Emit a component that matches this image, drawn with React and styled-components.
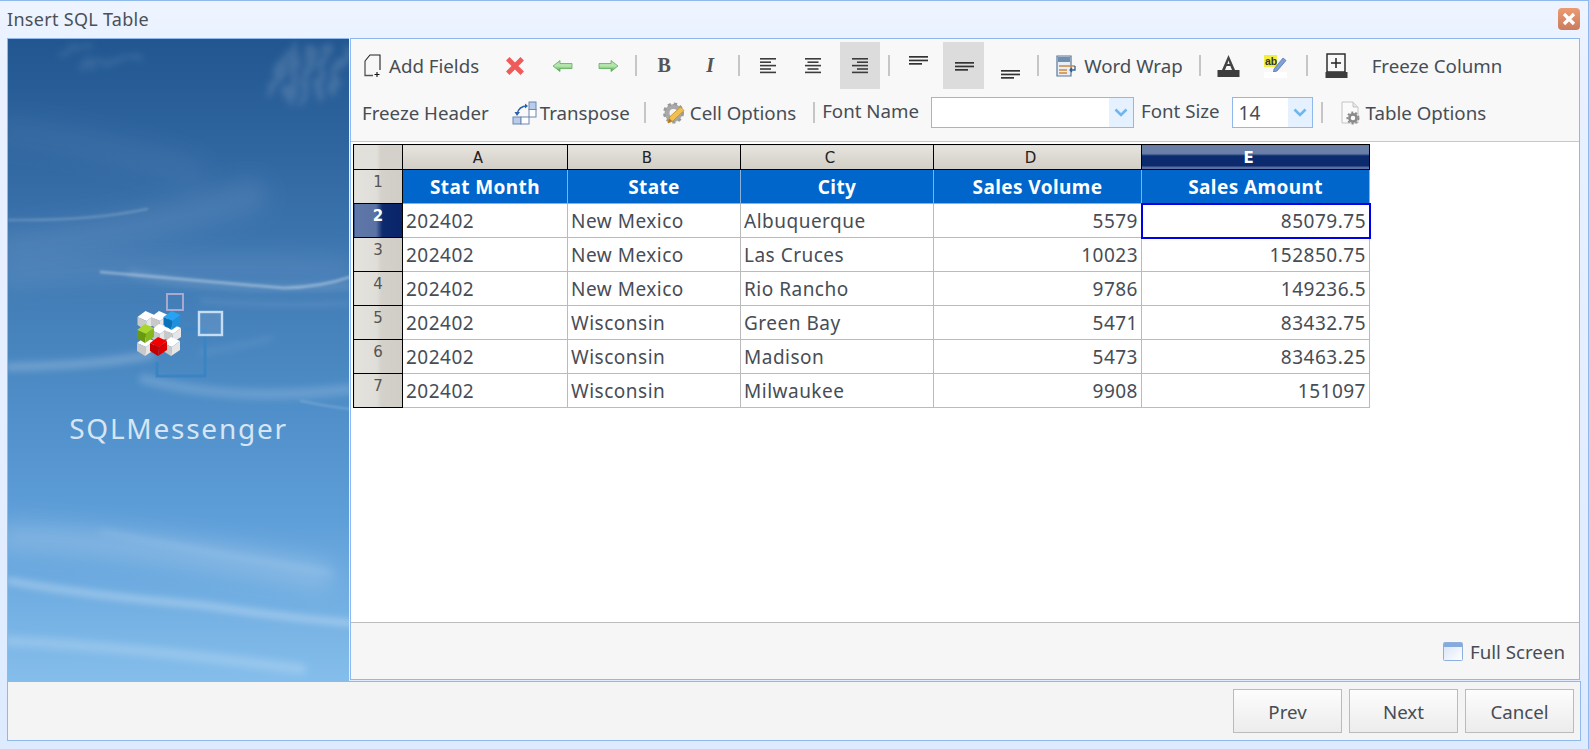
import React from 'react';
import styled, { createGlobalStyle, css } from 'styled-components';

const Global = createGlobalStyle`
  html, body { margin: 0; padding: 0; }
  body { font-family: "Noto Sans", "Open Sans", sans-serif; color: #474d55; overflow: hidden; }
  * { box-sizing: border-box; }
`;

const Window = styled.div`
  width: 1589px; height: 749px;
  display: flex; flex-direction: column;
  border: 1px solid #8fb8ec; border-bottom: 0; border-left: 0;
  background: linear-gradient(#eef4ff 0, #e9f1ff 60px, #deebff 100%);
`;
const TitleBar = styled.div`
  height: 37px; flex: none;
  display: flex; align-items: center; justify-content: space-between;
  padding: 0 8px 2px 7px;
`;
const Title = styled.div`
  font-size: 18px; letter-spacing: 0.3px; color: #4a5058;
`;
const CloseButton = styled.div`
  width: 22px; height: 22px; border-radius: 4px;
  background: linear-gradient(#ec9a72, #c97c5e);
  display: flex; align-items: center; justify-content: center;
`;
const Body = styled.div`
  flex: none; height: 643px; margin: 0 7px 0 7px;
  display: flex; gap: 1px;
`;
const Sidebar = styled.div`
  position: relative; width: 342px; flex: none; overflow: hidden;
  border: 1px solid #8fb8ec; border-bottom: 0; border-right: 0;
  display: flex; flex-direction: column; align-items: center;
  padding-top: 251px;
  background: #4d8cc6;
`;
const SkyArt = styled.svg`
  position: absolute; left: 0; top: 0; width: 342px; height: 643px;
`;
const LogoArt = styled.svg`
  position: relative; width: 100px; height: 90px; flex: none;
`;
const Brand = styled.div`
  position: relative; margin-top: 28px;
  font-size: 28px; line-height: 40px; letter-spacing: 1.75px; color: #d6e5f4;
`;
const Main = styled.div`
  flex: none; width: 1230px; height: 642px;
  border: 1px solid #8fb8ec;
  display: flex; flex-direction: column;
  background: #fff;
`;
const Toolbar = styled.div`
  flex: none; height: 103px; padding-top: 3px;
  background: #f8f8f8; border-bottom: 1px solid #b4cbea;
  display: flex; flex-direction: column;
`;
const Row = styled.div`
  height: 47px; display: flex; align-items: center;
  padding-left: ${p => p.$pad}px; white-space: nowrap;
`;
const Tool = styled.div`
  flex: none; height: 47px; display: flex; align-items: center;
  margin-left: ${p => p.$ml || 0}px;
  gap: ${p => p.$gap || 0}px;
  font-size: 18.7px; color: #474d55;
  ${p => p.$w && css`width: ${p.$w}px; justify-content: center;`}
  ${p => p.$active && css`background: #dcdcdc;`}
`;
const Sep = styled.div`
  flex: none; width: 2px; height: 21px; background: #c6c6c6;
  margin-left: ${p => p.$ml}px;
`;
const FieldLabel = styled.div`
  flex: none; font-size: 18.7px; color: #474d55;
  margin-left: ${p => p.$ml}px; margin-bottom: 4px;
`;
const Combo = styled.div`
  flex: none; width: ${p => p.$w}px; height: 31px; margin-left: ${p => p.$ml}px;
  border: 1px solid #8fb8ec; background: #fff;
  display: flex; justify-content: space-between; align-items: stretch;
  font-size: 19px; color: #474d55;
`;
const ComboValue = styled.div`
  padding-left: 6px; line-height: 31px;
`;
const ComboArrow = styled.div`
  width: 24px; background: #e6f1ff;
  display: flex; align-items: center; justify-content: center;
`;
const GlyphB = styled.span`
  font-family: "Liberation Serif", serif; font-weight: 700; font-size: 20px; color: #555;
`;
const GlyphI = styled.span`
  font-family: "Liberation Serif", serif; font-weight: 700; font-style: italic; font-size: 20px; color: #555;
`;
const TableArea = styled.div`
  flex: 1; background: #fff; padding: 2px 0 0 2px; overflow: hidden;
`;
const Sheet = styled.table`
  border-collapse: collapse; table-layout: fixed; width: 1016px;
  font-size: 19px; letter-spacing: 0.5px; color: #474d55;
`;
const ColHead = styled.th`
  height: 25px; border: 1px solid #000;
  font-family: "DejaVu Sans", sans-serif; font-size: 15px; letter-spacing: 0; line-height: 1;
  padding: 3px 14px 0 0;
  ${p => p.$sel
    ? css`color: #fff; font-weight: 700;
        background: linear-gradient(#6a7fa8 0, #6a7fa8 35%, #0c2a6e 42%, #0c2a6e 86%, #5c72a4 90%);`
    : css`color: #222; font-weight: 400;
        background: linear-gradient(#e6e4de, #d2cec5);`}
`;
const Corner = styled.th`
  height: 25px; padding: 0; border: 1px solid #000;
  background: linear-gradient(90deg, #e2e0da 0, #e2e0da 46%, #d4d1ca 54%);
`;
const RowHead = styled.td`
  height: 34px; padding: 0 0 10px; text-align: center; border: 1px solid #000;
  font-family: "DejaVu Sans", sans-serif; font-size: 15px; letter-spacing: 0;
  ${p => p.$sel
    ? css`color: #fff; font-weight: 700; background: linear-gradient(90deg, #6078a8 0, #5a72a4 45%, #0c2a6e 58%, #0a2468 100%);`
    : css`color: #555; background: linear-gradient(90deg, #e4e2dc 0, #e0ded8 46%, #d4d1ca 56%, #d0cdc6 100%);`}
`;
const HeadCell = styled.td`
  height: 34px; padding: 0; text-align: center;
  background: #0066cc; color: #fff; font-weight: 700; letter-spacing: 0.4px;
  border: 1px solid #8ab0dc; border-top-color: #000;
`;
const Cell = styled.td`
  height: 34px; padding: 0 3px; border: 1px solid #bbb;
  text-align: ${p => (p.$num ? 'right' : 'left')};
  white-space: nowrap; background: #fff;
  ${p => p.$sel && css`outline: 2px solid #0000e6; outline-offset: -1px;`}
`;
const StatusBar = styled.div`
  flex: none; height: 57px; padding-top: 1px; background: #f6f6f6; border-top: 1px solid #bbb;
  display: flex; align-items: center; justify-content: flex-end;
  padding-right: 14px; gap: 7px; font-size: 18.7px; color: #474d55;
`;
const Footer = styled.div`
  flex: none; height: 60px; margin: 0 7px;
  background: #f4f4f4; border: 1px solid #8fb8ec;
  display: flex; align-items: center; justify-content: flex-end; gap: 7px; padding-right: 6px;
`;
const Button = styled.button`
  width: 109px; height: 44px; padding: 0; font: inherit; font-size: 18.7px; color: #474d55;
  border: 1px solid #bbb; background: linear-gradient(#fdfdfd, #ececec); 
`;

const AlignIcon = ({ widths, anchor }) => (
  <svg width="20" height="20" viewBox="0 0 20 20">
    {widths.map((w, i) => {
      const x = anchor === 'l' ? 2 : anchor === 'r' ? 18 - w : 10 - w / 2;
      return <rect key={i} x={x} y={2 + i * 3.4} width={w} height="1.6" fill="#3c3c3c" />;
    })}
  </svg>
);
const VAlignIcon = ({ y }) => (
  <svg width="22" height="40" viewBox="0 0 22 40">
    <rect x="2" y={y} width="19" height="1.7" fill="#333" />
    <rect x="2" y={y + 3.6} width="19" height="1.7" fill="#333" />
    <rect x="2" y={y + 7} width="13" height="1.7" fill="#333" />
  </svg>
);
const Arrow = ({ dir }) => (
  <svg width="21" height="14" viewBox="0 0 21 14">
    <defs>
      <linearGradient id={`g${dir}`} x1="0" y1="0" x2="0" y2="1">
        <stop offset="0" stopColor="#a6dba0" /><stop offset=".5" stopColor="#b8e6ae" /><stop offset="1" stopColor="#3f9c42" />
      </linearGradient>
    </defs>
    <path transform={dir === 'r' ? 'translate(21 0) scale(-1 1)' : undefined}
      d="M1 7 L8 1.5 V4.5 H20 V9.5 H8 V12.5 Z" fill={`url(#g${dir})`} stroke="#5cb05c" strokeWidth=".8" />
  </svg>
);

const Cube = ({ x, y, t = '#fff', l = '#c9c9c9', r = '#e6e6e6' }) => (
  <g transform={`translate(${x} ${y})`}>
    <polygon points="0,6 8,0 17,4 9,10" fill={t} />
    <polygon points="0,6 9,10 8,19 0,14" fill={l} />
    <polygon points="9,10 17,4 17,13 8,19" fill={r} />
  </g>
);

const Soft = ({ id, dev }) => (
  <filter id={id} filterUnits="userSpaceOnUse" x="-60" y="-60" width="480" height="800">
    <feGaussianBlur stdDeviation={dev} />
  </filter>
);

const Sky = () => (
  <SkyArt viewBox="7 38 342 643" preserveAspectRatio="none">
    <defs>
      <linearGradient id="sky" x1="0" y1="0" x2="0" y2="1">
        <stop offset="0" stopColor="#215690" />
        <stop offset=".16" stopColor="#2f659f" />
        <stop offset=".35" stopColor="#3f78b2" />
        <stop offset=".55" stopColor="#4d8cc6" />
        <stop offset=".75" stopColor="#5f9fd9" />
        <stop offset="1" stopColor="#85beeb" />
      </linearGradient>
      <Soft id="b1" dev="1.2" />
      <Soft id="b3" dev="3.5" />
      <Soft id="b8" dev="11" />
      <filter id="cloud" filterUnits="userSpaceOnUse" x="-60" y="-60" width="480" height="300">
        <feTurbulence type="fractalNoise" baseFrequency=".05" numOctaves="3" seed="7" result="n" />
        <feDisplacementMap in="SourceGraphic" in2="n" scale="20" xChannelSelector="R" yChannelSelector="G" result="d" />
        <feGaussianBlur in="d" stdDeviation="3.2" />
      </filter>
    </defs>
    <rect x="7" y="38" width="342" height="643" fill="url(#sky)" />
    <g fill="none" stroke="#fff" strokeLinecap="round">
      <path filter="url(#cloud)" d="M272 92 L286 50 M288 96 L296 48 M302 100 L310 46 M318 96 L322 50 M332 88 L345 48" strokeWidth="9" strokeOpacity=".13" />
      <path filter="url(#cloud)" d="M62 52 L90 46 M85 62 L140 56" strokeWidth="8" strokeOpacity=".08" />
      <path filter="url(#b8)" d="M8 245 Q120 235 250 195" strokeWidth="34" strokeOpacity=".08" />
      <path filter="url(#b8)" d="M8 130 Q90 140 190 170" strokeWidth="30" strokeOpacity=".04" />
      <path filter="url(#b1)" d="M8 219 Q90 220 146 208" strokeWidth="2.5" strokeOpacity=".18" />
      <path filter="url(#b8)" d="M8 275 Q130 262 340 268" strokeWidth="24" strokeOpacity=".08" />
      <path filter="url(#b1)" d="M100 271 Q200 280 283 287 Q320 286 349 276" strokeWidth="3" strokeOpacity=".32" />
      <path filter="url(#b3)" d="M130 272 Q220 292 349 285" strokeWidth="7" strokeOpacity=".12" />
      <path filter="url(#b3)" d="M200 300 Q280 306 349 302" strokeWidth="4" strokeOpacity=".12" />
      <path filter="url(#b3)" d="M200 352 Q240 345 270 337" strokeWidth="3" strokeOpacity=".14" />
      <path filter="url(#b3)" d="M8 366 Q100 364 150 354" strokeWidth="8" strokeOpacity=".22" />
      <path filter="url(#b3)" d="M143 378 Q233 402 349 388" strokeWidth="10" strokeOpacity=".16" />
      <path filter="url(#b1)" d="M300 400 Q330 406 349 408" strokeWidth="2" strokeOpacity=".18" />
      <path filter="url(#b8)" d="M8 536 Q140 540 320 574" strokeWidth="26" strokeOpacity=".2" />
      <path filter="url(#b3)" d="M100 530 Q200 550 330 572" strokeWidth="3" strokeOpacity=".18" />
      <path filter="url(#b3)" d="M8 580 Q83 594 200 604 Q280 616 349 622" strokeWidth="6" strokeOpacity=".34" />
      <path filter="url(#b3)" d="M8 640 Q133 646 300 668" strokeWidth="11" strokeOpacity=".18" />
    </g>
  </SkyArt>
);

const Logo = () => (
  <LogoArt viewBox="128 290 100 90">
    <path d="M183 329 H204 V376 H156 V362" fill="none" stroke="#3a84c4" strokeWidth="3" />
    <rect x="166" y="294" width="16" height="16" fill="none" stroke="#a9a8cf" strokeWidth="2" />
    <rect x="198" y="312" width="23" height="23" fill="#fff" fillOpacity=".1" stroke="#c6def4" strokeWidth="2.4" />
    <Cube x={136.5} y={311} />
    <Cube x={150} y={311} />
    <Cube x={150} y={324} />
    <Cube x={163} y={324} />
    <Cube x={136} y={337} />
    <Cube x={162} y={337} />
    <Cube x={162.5} y={311} t="#28a2f2" l="#0a72b8" r="#1e90dc" />
    <Cube x={136} y={324} t="#a8d62c" l="#6a9a10" r="#84b81c" />
    <Cube x={149} y={337} t="#f20000" l="#c40000" r="#dc0000" />
  </LogoArt>
);

const Chevron = () => (
  <svg width="14" height="9" viewBox="0 0 14 9"><path d="M1.5 1.5 L7 7 L12.5 1.5" fill="none" stroke="#6db6ee" strokeWidth="2.6" /></svg>
);

const rows = [
  ['New Mexico', 'Albuquerque', '5579', '85079.75'],
  ['New Mexico', 'Las Cruces', '10023', '152850.75'],
  ['New Mexico', 'Rio Rancho', '9786', '149236.5'],
  ['Wisconsin', 'Green Bay', '5471', '83432.75'],
  ['Wisconsin', 'Madison', '5473', '83463.25'],
  ['Wisconsin', 'Milwaukee', '9908', '151097'],
];

export default function App() {
  return (
    <>
      <Global />
      <Window>
        <TitleBar>
          <Title>Insert SQL Table</Title>
          <CloseButton>
            <svg width="14" height="14" viewBox="0 0 14 14"><path d="M2 2 L12 12 M12 2 L2 12" stroke="#fff" strokeWidth="3.2" /></svg>
          </CloseButton>
        </TitleBar>
        <Body>
          <Sidebar>
            <Sky />
            <Logo />
            <Brand>SQLMessenger</Brand>
          </Sidebar>
          <Main>
            <Toolbar>
              <Row $pad={13}>
                <Tool $gap={8}>
                  <svg width="17" height="23" viewBox="0 0 17 23">
                    <path d="M1 7 L6 1 H16 V16" fill="none" stroke="#222" strokeWidth="1.1" />
                    <path d="M1 7 V21.5 H9" fill="none" stroke="#555" strokeWidth="1.3" />
                    <path d="M13 18 V23 M10.5 20.5 H15.5" stroke="#111" strokeWidth="1.1" />
                  </svg>
                  Add Fields
                </Tool>
                <Tool $ml={16} $w={40}>
                  <svg width="20" height="20" viewBox="0 0 18 18"><path d="M2.5 2.5 L15.5 15.5 M15.5 2.5 L2.5 15.5" stroke="#ef5a5a" strokeWidth="4.4" /></svg>
                </Tool>
                <Tool $ml={7} $w={40}><Arrow dir="l" /></Tool>
                <Tool $ml={6} $w={40}><Arrow dir="r" /></Tool>
                <Sep $ml={7} />
                <Tool $ml={7} $w={40}><GlyphB>B</GlyphB></Tool>
                <Tool $ml={6} $w={40}><GlyphI>I</GlyphI></Tool>
                <Sep $ml={8} />
                <Tool $ml={8} $w={40}><AlignIcon anchor="l" widths={[16, 11, 16, 11, 16]} /></Tool>
                <Tool $ml={5} $w={40}><AlignIcon anchor="c" widths={[16, 11, 16, 11, 16]} /></Tool>
                <Tool $ml={7} $w={40} $active><AlignIcon anchor="r" widths={[16, 11, 16, 11, 16]} /></Tool>
                <Sep $ml={8} />
                <Tool $ml={8} $w={40}><VAlignIcon y={10} /></Tool>
                <Tool $ml={5} $w={41} $active><VAlignIcon y={16} /></Tool>
                <Tool $ml={6} $w={40}><VAlignIcon y={24} /></Tool>
                <Sep $ml={7} />
                <Tool $ml={17} $gap={7}>
                  <svg width="21" height="22" viewBox="0 0 21 22">
                    <path d="M1 1 H15 V21 H1 Z" fill="#e8eef6" stroke="#5b7795" strokeWidth="1.2" />
                    <rect x="2" y="2" width="12" height="5" fill="#6f8fb0" />
                    <path d="M3 11 H19 M3 15 H11 M3 18 H11" stroke="#d0863c" strokeWidth="1.6" />
                    <path d="M19 11 V15 H14 M16 13 L14 15 L16 17" fill="none" stroke="#2d5f92" strokeWidth="1.3" />
                  </svg>
                  Word Wrap
                </Tool>
                <Sep $ml={16} />
                <Tool $ml={8} $w={40}>
                  <svg width="23" height="24" viewBox="0 0 23 24">
                    <path d="M11.5 1 L18 16 H15 L13.4 12 H9.6 L8 16 H5 Z M10.4 10 H12.6 L11.5 6.5 Z" fill="#444" fillRule="evenodd" />
                    <rect x="0.5" y="16" width="22" height="7" fill="#3d3d3d" />
                  </svg>
                </Tool>
                <Tool $ml={7} $w={40}>
                  <svg width="23" height="24" viewBox="0 0 23 24">
                    <rect x="0" y="1" width="13" height="12" fill="#f2ee3c" />
                    <text x="1" y="10.5" fontFamily="Liberation Sans" fontSize="10.5" fontWeight="700" fill="#333">ab</text>
                    <path d="M10 15 L19 4 L22 6.5 L13 17 L9.5 18 Z" fill="#7f9fd8" stroke="#4a6aa8" strokeWidth=".7" />
                    <rect x="0" y="18" width="23" height="6" fill="#fff" />
                  </svg>
                </Tool>
                <Sep $ml={10} />
                <Tool $ml={9} $w={40}>
                  <svg width="23" height="25" viewBox="0 0 23 25">
                    <rect x="2" y="1" width="18" height="18" fill="none" stroke="#222" strokeWidth="1.4" />
                    <path d="M11 5 V15 M6 10 H16" stroke="#222" strokeWidth="1.5" />
                    <rect x="0.5" y="19" width="22" height="6" fill="#3d3d3d" />
                  </svg>
                </Tool>
                <Tool $ml={15}>Freeze Column</Tool>
              </Row>
              <Row $pad={11}>
                <Tool>Freeze Header</Tool>
                <Tool $ml={23} $gap={3}>
                  <svg width="25" height="24" viewBox="0 0 25 24">
                    <rect x="17" y="1" width="7" height="7.5" fill="#b9ccec" stroke="#6b86b0" />
                    <rect x="17" y="8.5" width="7" height="7.5" fill="#fff" stroke="#6b86b0" />
                    <rect x="1" y="16" width="8" height="7" fill="#b9ccec" stroke="#6b86b0" />
                    <rect x="9" y="16" width="8" height="7" fill="#fff" stroke="#6b86b0" />
                    <path d="M15 5 Q7 5 5 13" fill="none" stroke="#2b62ad" strokeWidth="1.3" />
                    <path d="M13 2.5 L16 5 L13 7.5 Z M2.5 11 H8 L5 15 Z" fill="#2b62ad" />
                  </svg>
                  Transpose
                </Tool>
                <Sep $ml={14} />
                <Tool $ml={17} $gap={5}>
                  <svg width="22" height="24" viewBox="0 0 22 24">
                    <circle cx="10.5" cy="12" r="6.5" fill="none" stroke="#a9a9a9" strokeWidth="5" />
                    <circle cx="10.5" cy="12" r="9.2" fill="none" stroke="#9a9a9a" strokeWidth="2.6" strokeDasharray="3.2 3" />
                    <circle cx="10.5" cy="12" r="3" fill="#f4f4f4" />
                    <path d="M5 22 L6.5 16 L17.5 6 L21 9.5 L10 20 Z" fill="#f0c050" stroke="#c48a20" strokeWidth=".8" />
                    <path d="M5 22 L6.5 17.5 L9 20 Z" fill="#b5702a" />
                  </svg>
                  Cell Options
                </Tool>
                <Sep $ml={17} />
                <FieldLabel $ml={7}>Font Name</FieldLabel>
                <Combo $ml={12} $w={203}>
                  <ComboValue />
                  <ComboArrow><Chevron /></ComboArrow>
                </Combo>
                <FieldLabel $ml={7}>Font Size</FieldLabel>
                <Combo $ml={12} $w={81}>
                  <ComboValue>14</ComboValue>
                  <ComboArrow><Chevron /></ComboArrow>
                </Combo>
                <Sep $ml={8} />
                <Tool $ml={18} $gap={4}>
                  <svg width="21" height="24" viewBox="0 0 21 24">
                    <path d="M1 1 H12 L17 6 V22 H1 Z" fill="#fafafa" stroke="#c4c4c4" />
                    <path d="M12 1 V6 H17" fill="#e4e4e4" stroke="#c4c4c4" />
                    <circle cx="12" cy="17" r="3.6" fill="none" stroke="#8a8a8a" strokeWidth="2.6" />
                    <circle cx="12" cy="17" r="5.6" fill="none" stroke="#8a8a8a" strokeWidth="1.8" strokeDasharray="2 2" />
                  </svg>
                  Table Options
                </Tool>
              </Row>
            </Toolbar>
            <TableArea>
              <Sheet>
                <colgroup>
                  <col width="49" /><col width="165" /><col width="173" /><col width="193" /><col width="208" /><col width="228" />
                </colgroup>
                <thead>
                  <tr>
                    <Corner />
                    <ColHead>A</ColHead>
                    <ColHead>B</ColHead>
                    <ColHead>C</ColHead>
                    <ColHead>D</ColHead>
                    <ColHead $sel>E</ColHead>
                  </tr>
                </thead>
                <tbody>
                  <tr>
                    <RowHead>1</RowHead>
                    <HeadCell>Stat Month</HeadCell>
                    <HeadCell>State</HeadCell>
                    <HeadCell>City</HeadCell>
                    <HeadCell>Sales Volume</HeadCell>
                    <HeadCell>Sales Amount</HeadCell>
                  </tr>
                  {rows.map((r, i) => (
                    <tr key={i}>
                      <RowHead $sel={i === 0}>{i + 2}</RowHead>
                      <Cell>202402</Cell>
                      <Cell>{r[0]}</Cell>
                      <Cell>{r[1]}</Cell>
                      <Cell $num>{r[2]}</Cell>
                      <Cell $num $sel={i === 0}>{r[3]}</Cell>
                    </tr>
                  ))}
                </tbody>
              </Sheet>
            </TableArea>
            <StatusBar>
              <svg width="20" height="19" viewBox="0 0 20 19">
                <defs>
                  <linearGradient id="fs" x1="0" y1="0" x2="1" y2="1">
                    <stop offset="0" stopColor="#d6e2f6" /><stop offset="1" stopColor="#fff" />
                  </linearGradient>
                </defs>
                <rect x=".5" y=".5" width="19" height="18" rx="1" fill="url(#fs)" stroke="#8fb0de" />
                <rect x="1" y="1" width="18" height="4" fill="#84aade" />
              </svg>
              Full Screen
            </StatusBar>
          </Main>
        </Body>
        <Footer>
          <Button>Prev</Button>
          <Button>Next</Button>
          <Button>Cancel</Button>
        </Footer>
      </Window>
    </>
  );
}
